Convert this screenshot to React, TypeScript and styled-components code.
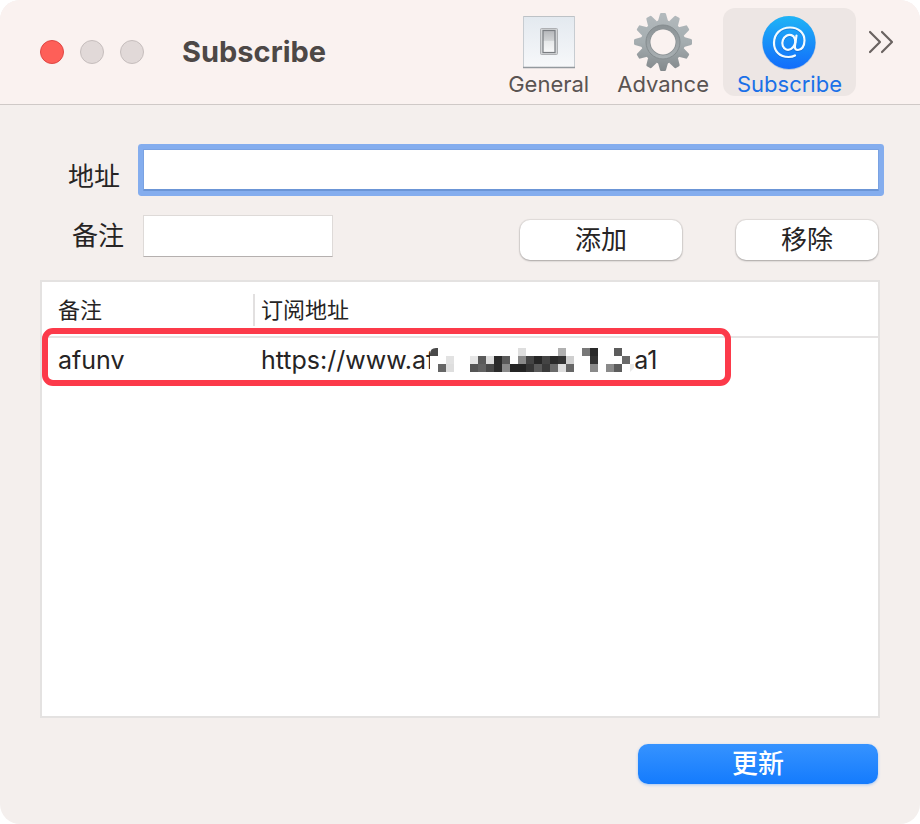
import React from "react";
import styled, { createGlobalStyle, css } from "styled-components";

const GlobalStyle = createGlobalStyle`
  * { box-sizing: border-box; }
  body {
    margin: 0;
    background: #ffffff;
    font-family: Inter, "Noto Sans CJK SC", sans-serif;
    color: #262424;
  }
  button, input { font: inherit; color: inherit; }
`;

const Window = styled.div`
  display: flex;
  flex-direction: column;
  min-height: 100vh;
  border-radius: 20px;
  overflow: hidden;
  background: #f4efed;
`;

const TitleBar = styled.header`
  display: flex;
  align-items: flex-start;
  height: 105px;
  padding: 8px 25px 0 40px;
  background: #faf2f0;
  border-bottom: 1px solid #cfc9c7;
`;

const Lights = styled.div`
  display: flex;
  gap: 16px;
  padding-top: 32px;
`;

const Light = styled.button<{ $active?: boolean }>`
  width: 24px;
  height: 24px;
  padding: 0;
  border-radius: 50%;
  border: 1px solid ${(p) => (p.$active ? "#df4744" : "#c6bebd")};
  background: ${(p) => (p.$active ? "#fe5f58" : "#e1d9d8")};
`;

const Title = styled.h1`
  flex: 1;
  margin: 0;
  padding: 24px 0 0 38px;
  font-size: 29px;
  line-height: 40px;
  font-weight: 700;
  color: #4d4846;
`;

const Toolbar = styled.nav`
  display: flex;
`;

const Tool = styled.button<{ $selected?: boolean }>`
  display: flex;
  flex-direction: column;
  align-items: center;
  height: 88px;
  padding: 4px 14px 0;
  border: 0;
  border-radius: 12px;
  font-size: 22px;
  line-height: 24px;
  color: #5a5452;
  background: transparent;
  svg { display: block; }
  ${(p) =>
    p.$selected &&
    css`
      color: #1a70e8;
      background: #ede6e4;
    `}
`;

const More = styled.button`
  padding: 20px 0 0 11px;
  border: 0;
  background: transparent;
  svg { display: block; }
`;

const Content = styled.main`
  flex: 1;
  display: flex;
  flex-direction: column;
  padding: 44px 40px 40px;
`;

const Form = styled.form`
  display: flex;
  flex-direction: column;
  gap: 24px;
  padding-right: 1px;
`;

const Row = styled.div<{ $align: string }>`
  display: flex;
  align-items: ${(p) => p.$align};
  height: 42px;
`;

const Label = styled.label<{ $indent: number }>`
  width: 103px;
  padding-left: ${(p) => p.$indent}px;
  font-size: 26px;
  line-height: 28px;
`;

const Field = styled.input<{ $wide?: boolean }>`
  height: 42px;
  padding: 0 8px;
  border: 1px solid #dedad8;
  border-bottom-color: #b5b0af;
  border-radius: 0;
  outline: none;
  background: #ffffff;
  font-size: 26px;
  ${(p) =>
    p.$wide
      ? css`
          flex: 1;
          min-width: 0;
          border-color: #7aa2e2;
          border-bottom: 2px solid #6b95d6;
          box-shadow: 0 0 0 5px #84adee;
          border-radius: 1px;
        `
      : css`
          width: 190px;
        `}
`;

const Actions = styled.div`
  display: flex;
  gap: 54px;
  margin-left: auto;
  padding: 8px 1px 0 0;
`;

const PushButton = styled.button<{ $width: number; $primary?: boolean }>`
  width: ${(p) => p.$width}px;
  height: 40px;
  padding: 0;
  border: 0;
  border-radius: 10px;
  font-size: 26px;
  line-height: 38px;
  background: #ffffff;
  box-shadow: 0 0 1px 1px rgba(0, 0, 0, 0.08), 0 1px 2px rgba(0, 0, 0, 0.25);
  ${(p) =>
    p.$primary &&
    css`
      color: #ffffff;
      font-weight: 500;
      background: linear-gradient(#3693ff, #147bfd);
      box-shadow: 0 1px 3px rgba(20, 123, 253, 0.35);
    `}
`;

const TableFrame = styled.section`
  flex: 1;
  margin: 23px 0 26px;
  border: 2px solid #e4e2e1;
  background: #ffffff;
`;

const Table = styled.table`
  width: 100%;
  border-collapse: collapse;
  table-layout: fixed;
  text-align: left;
`;

const HeadRow = styled.tr`
  height: 55px;
  border-bottom: 2px solid #e6e4e4;
`;

const Head = styled.th<{ $first?: boolean }>`
  padding: 0;
  font-size: 22px;
  line-height: 32px;
  font-weight: 400;
  width: ${(p) => (p.$first ? "211px" : "auto")};
  span {
    display: block;
    margin-top: 2px;
    padding-left: ${(p) => (p.$first ? 16 : 6)}px;
    border-left: ${(p) => (p.$first ? "0" : "2px solid #e2e0e0")};
  }
`;

const BodyRow = styled.tr`
  position: relative;
  height: 44px;
`;

const Cell = styled.td<{ $first?: boolean }>`
  padding: 0 0 0 ${(p) => (p.$first ? 16 : 8)}px;
  font-size: 25px;
  line-height: 40px;
  white-space: nowrap;
`;

const Address = styled.span`
  display: flex;
  align-items: center;
  svg {
    margin-left: -5px;
    background: #ffffff;
  }
`;

const Highlight = styled.span`
  position: absolute;
  top: -9px;
  left: 0;
  width: 689px;
  height: 58px;
  border: 6px solid #fc3a4a;
  border-radius: 11px;
  pointer-events: none;
`;

const Footer = styled.footer`
  display: flex;
  justify-content: flex-end;
  padding-right: 2px;
`;

const SwitchIcon = () => (
  <svg width="60" height="60" viewBox="0 0 60 60" aria-hidden="true">
    <defs>
      <linearGradient id="plate" x1="0" y1="0" x2="0" y2="1">
        <stop offset="0" stopColor="#e3e9ef" />
        <stop offset="1" stopColor="#f7f8fa" />
      </linearGradient>
      <linearGradient id="rocker" x1="0" y1="0" x2="0" y2="1">
        <stop offset="0" stopColor="#b5b7ba" />
        <stop offset="0.45" stopColor="#d1d3d5" />
        <stop offset="0.48" stopColor="#e7e9ea" />
        <stop offset="1" stopColor="#f9f9fa" />
      </linearGradient>
    </defs>
    <rect x="4" y="4" width="52" height="52" fill="url(#plate)" />
    <path d="M4 4.500H56" stroke="#bdc2c6" />
    <path d="M4.500 4V55M55.500 4V55" stroke="#c7ccd1" />
    <path d="M4 55.500H56" stroke="#93999e" strokeWidth="1.500" />
    <rect x="21.500" y="16.500" width="17" height="26" rx="1" fill="#d2d4d6" stroke="#aeb0b3" />
    <rect x="24" y="18.500" width="12" height="22" fill="url(#rocker)" stroke="#7b7e82" strokeWidth="1.200" />
  </svg>
);

const teeth = Array.from({ length: 12 }, (_, i) => i * 30);

const GearIcon = () => (
  <svg width="60" height="60" viewBox="0 0 60 60" aria-hidden="true">
    <defs>
      <linearGradient id="metal" gradientUnits="userSpaceOnUse" x1="0" y1="1" x2="0" y2="59">
        <stop offset="0" stopColor="#b3babd" />
        <stop offset="0.5" stopColor="#a5adb0" />
        <stop offset="1" stopColor="#83898c" />
      </linearGradient>
      <linearGradient id="collar" gradientUnits="userSpaceOnUse" x1="0" y1="13" x2="0" y2="47">
        <stop offset="0" stopColor="#8b9295" />
        <stop offset="1" stopColor="#a9b0b3" />
      </linearGradient>
      <mask id="gearShape">
        <circle cx="30" cy="30" r="22" fill="#fff" />
        {teeth.map((a) => (
          <path key={a} d="M25 9L27 2Q27.200 1 28.200 1H31.800Q32.800 1 33 2L35 9Z" fill="#fff" transform={`rotate(${a} 30 30)`} />
        ))}
        <circle cx="30" cy="30" r="12.500" fill="#000" />
      </mask>
    </defs>
    <g mask="url(#gearShape)">
      <rect width="60" height="60" fill="url(#metal)" />
      <circle cx="30" cy="30" r="15" fill="none" stroke="url(#collar)" strokeWidth="4" />
      <circle cx="30" cy="30" r="17" fill="none" stroke="#858c8f" />
      <circle cx="30" cy="30" r="13" fill="none" stroke="#8b9194" />
    </g>
  </svg>
);

const AtIcon = () => (
  <svg width="60" height="60" viewBox="0 0 60 60" aria-hidden="true">
    <defs>
      <linearGradient id="sky" x1="0" y1="0" x2="0" y2="1">
        <stop offset="0" stopColor="#1fb4f6" />
        <stop offset="1" stopColor="#126cfb" />
      </linearGradient>
    </defs>
    <circle cx="30" cy="31" r="27" fill="#b8c6dc" />
    <circle cx="30" cy="30.500" r="26.500" fill="url(#sky)" />
    <g fill="none" strokeLinecap="round" strokeLinejoin="round" strokeWidth="2.200">
      <g stroke="#1565c8" opacity="0.6" transform="translate(0 1)">
        <path d="M36 43.500C34 44.700 31.500 45 29.500 45C20.500 45 15 39 15 31C15 22 21.500 15.500 31 15.500C39.500 15.500 45.500 21 45.500 28.500C45.500 34.500 42.500 38 39 38C36.500 38 35.500 36.300 36 33.500L37.500 23.500" />
        <ellipse cx="29.800" cy="30.300" rx="6.300" ry="7.600" transform="rotate(20 29.800 30.300)" />
      </g>
      <g stroke="#f2fbff">
        <path d="M36 43.500C34 44.700 31.500 45 29.500 45C20.500 45 15 39 15 31C15 22 21.500 15.500 31 15.500C39.500 15.500 45.500 21 45.500 28.500C45.500 34.500 42.500 38 39 38C36.500 38 35.500 36.300 36 33.500L37.500 23.500" />
        <ellipse cx="29.800" cy="30.300" rx="6.300" ry="7.600" transform="rotate(20 29.800 30.300)" />
      </g>
    </g>
  </svg>
);

const MoreIcon = () => (
  <svg width="28" height="28" viewBox="0 0 28 28" fill="none" stroke="#6a6361" strokeWidth="2.200" strokeLinecap="round" strokeLinejoin="round" aria-hidden="true">
    <path d="M3 4L13 14L3 24M15 4L25 14L15 24" />
  </svg>
);

/* Each entry is column, row and grey level of one censored block. */
const blocks: [number, number, string][] = [
  [11, 0, "#dedede"], [16, 0, "#b0b0b0"], [19, 0, "#787878"], [20, 0, "#292929"], [23, 0, "#5c5c5c"],
  [2, 1, "#e2e2e2"], [5, 1, "#e6e6e6"], [6, 1, "#5a5a5a"], [7, 1, "#dddddd"], [8, 1, "#2a2a2a"], [9, 1, "#5a5a5a"],
  [11, 1, "#8a8a8a"], [12, 1, "#444444"], [13, 1, "#262626"], [14, 1, "#444444"], [15, 1, "#2a2a2a"],
  [16, 1, "#333333"], [17, 1, "#cfcfcf"], [20, 1, "#333333"], [24, 1, "#6a6a6a"],
  [1, 2, "#666666"], [2, 2, "#dedede"], [5, 2, "#555555"], [6, 2, "#626262"], [7, 2, "#484848"], [8, 2, "#2a2a2a"],
  [9, 2, "#8a8a8a"], [10, 2, "#242424"], [11, 2, "#242424"], [12, 2, "#363636"], [13, 2, "#5a5a5a"], [14, 2, "#3a3a3a"],
  [15, 2, "#6a6a6a"], [16, 2, "#dddddd"], [17, 2, "#666666"], [20, 2, "#8a8a8a"], [22, 2, "#8a8a8a"], [23, 2, "#5c5c5c"],
];

const Mosaic = () => (
  <svg width="204" height="24" viewBox="0 0 204 24" aria-hidden="true">
    <path d="M8 0V8H0V6Q0 0 6 0Z" fill="#4a4a4a" />
    {blocks.map(([x, y, fill]) => (
      <rect key={`${x}-${y}`} x={x * 8} y={y * 8} width="8" height="8" fill={fill} />
    ))}
    <path d="M200 16H204V20L200 24Z" fill="#e8e8e8" />
  </svg>
);

export default function App() {
  return (
    <Window>
      <GlobalStyle />
      <TitleBar>
        <Lights>
          <Light $active aria-label="Close" />
          <Light aria-label="Minimize" />
          <Light aria-label="Zoom" />
        </Lights>
        <Title>Subscribe</Title>
        <Toolbar>
          <Tool><SwitchIcon />General</Tool>
          <Tool><GearIcon />Advance</Tool>
          <Tool $selected><AtIcon />Subscribe</Tool>
        </Toolbar>
        <More aria-label="More"><MoreIcon /></More>
      </TitleBar>
      <Content>
        <Form>
          <Row $align="flex-end">
            <Label htmlFor="address" $indent={28}>地址</Label>
            <Field id="address" type="text" $wide />
          </Row>
          <Row $align="center">
            <Label htmlFor="remark" $indent={32}>备注</Label>
            <Field id="remark" type="text" />
            <Actions>
              <PushButton type="button" $width={162}>添加</PushButton>
              <PushButton type="button" $width={142}>移除</PushButton>
            </Actions>
          </Row>
        </Form>
        <TableFrame>
          <Table>
            <thead>
              <HeadRow>
                <Head $first><span>备注</span></Head>
                <Head><span>订阅地址</span></Head>
              </HeadRow>
            </thead>
            <tbody>
              <BodyRow>
                <Cell $first>afunv<Highlight /></Cell>
                <Cell><Address>https://www.af<Mosaic />a1</Address></Cell>
              </BodyRow>
            </tbody>
          </Table>
        </TableFrame>
        <Footer>
          <PushButton $width={240} $primary>更新</PushButton>
        </Footer>
      </Content>
    </Window>
  );
}
